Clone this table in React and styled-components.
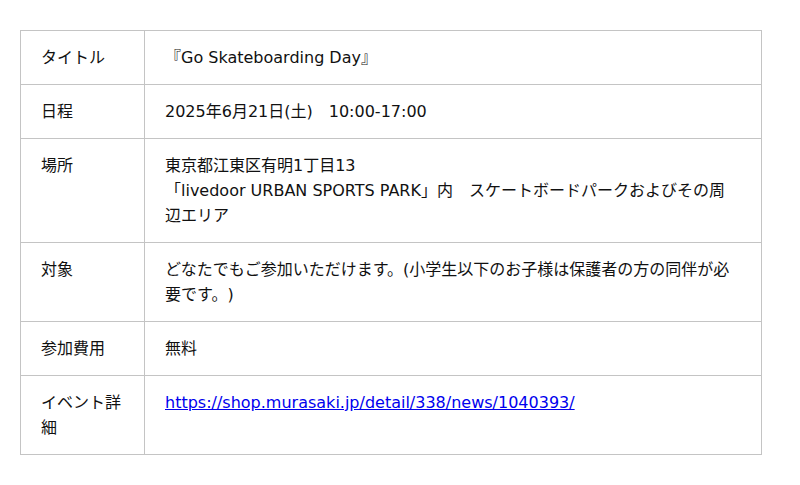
import React from "react";
import styled, { createGlobalStyle } from "styled-components";

const Global = createGlobalStyle`
  html, body { margin: 0; padding: 0; background: #fff; }
  body {
    font-family: "DejaVu Sans", "Noto Sans CJK JP", sans-serif;
    color: #111;
    text-spacing-trim: space-all;
  }
`;

const Page = styled.div`
  padding: 30px 20px;
`;

const Table = styled.table`
  width: 742px;
  border-collapse: collapse;
  font-size: 16px;
  line-height: 25px;
  border: 1px solid #d4d4d4;
`;

const Row = styled.tr``;

const Head = styled.th`
  width: 83px;
  text-align: left;
  vertical-align: top;
  font-weight: normal;
  padding: 14px 20px;
  border: 1px solid #c4c4c4;
`;

const Cell = styled.td`
  vertical-align: top;
  padding: 14px 26px 14px 20px;
  border: 1px solid #c4c4c4;
`;

const Link = styled.a`
  color: #0000ee;
  text-decoration: underline;
`;

const rows = [
  ["タイトル", "『Go Skateboarding Day』"],
  ["日程", "2025年6月21日(土)　10:00-17:00"],
  [
    "場所",
    <>
      東京都江東区有明1丁目13
      <br />
      「livedoor URBAN SPORTS PARK」内　スケートボードパークおよびその周辺エリア
    </>,
  ],
  ["対象", "どなたでもご参加いただけます。(小学生以下のお子様は保護者の方の同伴が必要です。)"],
  ["参加費用", "無料"],
  [
    "イベント詳細",
    <Link href="#">https://shop.murasaki.jp/detail/338/news/1040393/</Link>,
  ],
];

export default function App() {
  return (
    <>
      <Global />
      <Page>
        <Table>
          <tbody>
            {rows.map(([h, c], i) => (
              <Row key={i}>
                <Head>{h}</Head>
                <Cell>{c}</Cell>
              </Row>
            ))}
          </tbody>
        </Table>
      </Page>
    </>
  );
}
